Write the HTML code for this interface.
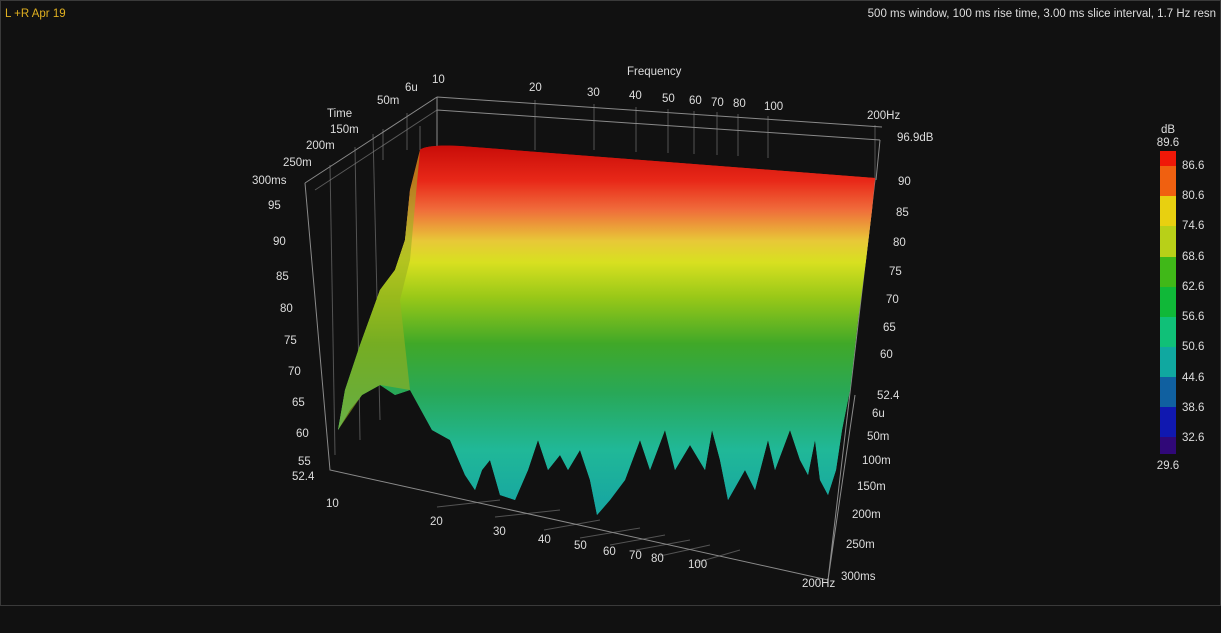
<!DOCTYPE html>
<html><head><meta charset="utf-8"><style>
html,body{margin:0;padding:0;background:#111;width:1221px;height:633px;overflow:hidden;font-family:"Liberation Sans",sans-serif}
svg{position:absolute;left:0;top:0}
text{font-family:"Liberation Sans",sans-serif;font-size:11.5px;fill:#ddd}
</style></head><body>
<svg width="1221" height="633" viewBox="0 0 1221 633">
<defs>
<linearGradient id="g" x1="0" y1="145" x2="0" y2="500" gradientUnits="userSpaceOnUse">
<stop offset="0" stop-color="#c80c08"/>
<stop offset="0.1" stop-color="#e82818"/>
<stop offset="0.18" stop-color="#f06a3a"/>
<stop offset="0.27" stop-color="#e8c838"/>
<stop offset="0.33" stop-color="#d8e020"/>
<stop offset="0.43" stop-color="#98c818"/>
<stop offset="0.56" stop-color="#40a828"/>
<stop offset="0.7" stop-color="#28a858"/>
<stop offset="0.86" stop-color="#20b898"/>
<stop offset="1" stop-color="#18a8a0"/>
</linearGradient>
<pattern id="st" width="31" height="600" patternUnits="userSpaceOnUse" patternTransform="skewX(4)">
<rect x="0" y="0" width="6" height="600" fill="#000" opacity="0.12"/>
<rect x="16" y="0" width="4" height="600" fill="#fff" opacity="0.06"/>
</pattern>
</defs>
<rect x="0" y="0" width="1221" height="633" fill="#111"/>
<rect x="0.5" y="0.5" width="1220" height="605" fill="none" stroke="#3a3a3a"/>
<text x="5" y="17" style="fill:#e0b020">L +R Apr 19</text>
<text x="1216" y="17" text-anchor="end">500 ms window, 100 ms rise time, 3.00 ms slice interval, 1.7 Hz resn</text>
<g stroke="#8a8a8a" stroke-width="1" fill="none">
<path d="M437 97 L882 127 M437 110 L880 140 M437 97 L437 150 M437 97 L305 183 M305 183 L330 470 L828 580 L875 180 M880 140 L876 180 M828 580 L855 395"/>
<path d="M437 110 L315 190 M420 126 L420 150" opacity="0.6"/>
<g opacity="0.55">
<path d="M535 100 L535 150 M594 104 L594 150 M636 107 L636 152 M668 109 L668 153 M694 111 L694 154 M717 112 L717 155 M738 114 L738 156 M768 116 L768 158 M875 125 L875 180"/>
<path d="M407 113 L407 150 M383 129 L383 160 M355 147 L360 440 M330 165 L335 455 M373 134 L380 420"/>
<path d="M437 507 L500 500 M495 517 L560 510 M544 530 L600 520 M580 538 L640 528 M610 545 L665 535 M636 550 L690 540 M660 556 L710 545 M695 563 L740 550"/>
</g>
</g>
<path id="s" d="M420 150 C424 146 440 145 460 146 L875 178 L872 210 L866 260 L858 320 L850 390 L842 430 L836 470 L828 495 L820 480 L815 440 L808 475 L800 460 L790 430 L775 470 L768 440 L755 490 L745 470 L728 500 L720 460 L712 430 L705 470 L690 445 L675 470 L665 430 L650 470 L640 440 L625 480 L610 500 L597 515 L590 480 L580 450 L568 470 L560 455 L548 470 L538 440 L528 470 L515 500 L500 495 L490 460 L482 470 L475 490 L465 475 L450 440 L432 430 L410 390 L395 395 L380 385 L362 395 L350 410 L338 430 L345 390 L360 345 L380 290 L395 270 L405 240 L410 190 Z" fill="url(#g)"/>
<use href="#s" fill="url(#st)"/>
<path d="M420 150 L410 190 L405 240 L395 270 L380 290 L360 345 L345 390 L338 430 L362 395 L380 385 L410 390 L400 300 L410 260 Z" fill="#9ab020" opacity="0.6"/>
<g>
<text x="627" y="75">Frequency</text>
<text x="432" y="83">10</text><text x="529" y="91">20</text><text x="587" y="96">30</text><text x="629" y="99">40</text><text x="662" y="102">50</text><text x="689" y="104">60</text><text x="711" y="106">70</text><text x="733" y="107">80</text><text x="764" y="110">100</text><text x="867" y="119">200Hz</text>
<text x="897" y="141">96.9dB</text>
<text x="405" y="91">6u</text><text x="377" y="104">50m</text><text x="327" y="117">Time</text><text x="330" y="133">150m</text><text x="306" y="149">200m</text><text x="283" y="166">250m</text><text x="252" y="184">300ms</text>
<text x="268" y="209">95</text><text x="273" y="245">90</text><text x="276" y="280">85</text><text x="280" y="312">80</text><text x="284" y="344">75</text><text x="288" y="375">70</text><text x="292" y="406">65</text><text x="296" y="437">60</text><text x="298" y="465">55</text><text x="292" y="480">52.4</text>
<text x="326" y="507">10</text><text x="430" y="525">20</text><text x="493" y="535">30</text><text x="538" y="543">40</text><text x="574" y="549">50</text><text x="603" y="555">60</text><text x="629" y="559">70</text><text x="651" y="562">80</text><text x="688" y="568">100</text><text x="802" y="587">200Hz</text>
<text x="898" y="185">90</text><text x="896" y="216">85</text><text x="893" y="246">80</text><text x="889" y="275">75</text><text x="886" y="303">70</text><text x="883" y="331">65</text><text x="880" y="358">60</text><text x="877" y="399">52.4</text>
<text x="872" y="417">6u</text><text x="867" y="440">50m</text><text x="862" y="464">100m</text><text x="857" y="490">150m</text><text x="852" y="518">200m</text><text x="846" y="548">250m</text><text x="841" y="580">300ms</text>
</g>
<g>
<text x="1168" y="133" text-anchor="middle">dB</text>
<text x="1168" y="146" text-anchor="middle">89.6</text>
<rect x="1160" y="151" width="16" height="15" fill="#f01808"/>
<rect x="1160" y="166" width="16" height="30" fill="#f06010"/>
<rect x="1160" y="196" width="16" height="30" fill="#e8d010"/>
<rect x="1160" y="226" width="16" height="31" fill="#b8d018"/>
<rect x="1160" y="257" width="16" height="30" fill="#40b818"/>
<rect x="1160" y="287" width="16" height="30" fill="#10b838"/>
<rect x="1160" y="317" width="16" height="30" fill="#10c078"/>
<rect x="1160" y="347" width="16" height="30" fill="#10a8a0"/>
<rect x="1160" y="377" width="16" height="30" fill="#1060a0"/>
<rect x="1160" y="407" width="16" height="30" fill="#1018b0"/>
<rect x="1160" y="437" width="16" height="17" fill="#300878"/>
<text x="1182" y="169">86.6</text><text x="1182" y="199">80.6</text><text x="1182" y="229">74.6</text><text x="1182" y="260">68.6</text><text x="1182" y="290">62.6</text><text x="1182" y="320">56.6</text><text x="1182" y="350">50.6</text><text x="1182" y="381">44.6</text><text x="1182" y="411">38.6</text><text x="1182" y="441">32.6</text>
<text x="1168" y="469" text-anchor="middle">29.6</text>
</g>
</svg>
</body></html>
